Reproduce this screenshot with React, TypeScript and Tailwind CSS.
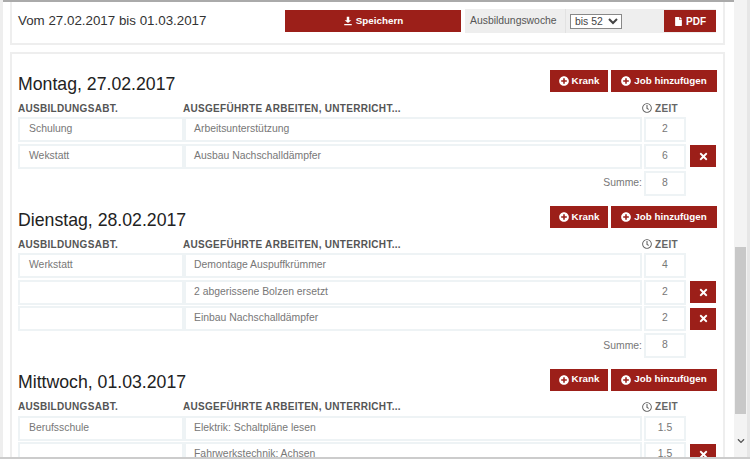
import { FaFile, FaPlusCircle, FaRegClock, FaTimes, FaChevronDown } from "react-icons/fa";

type Row = { dept: string; work: string; time: string; remove?: boolean };

type Day = { title: string; rows: Row[]; sum?: string };

const days: Day[] = [
    {
        title: "Montag, 27.02.2017",
        sum: "8",
        rows: [
            { dept: "Schulung", work: "Arbeitsunterstützung", time: "2" },
            { dept: "Wekstatt", work: "Ausbau Nachschalldämpfer", time: "6", remove: true },
        ],
    },
    {
        title: "Dienstag, 28.02.2017",
        sum: "8",
        rows: [
            { dept: "Werkstatt", work: "Demontage Auspuffkrümmer", time: "4" },
            { dept: "", work: "2 abgerissene Bolzen ersetzt", time: "2", remove: true },
            { dept: "", work: "Einbau Nachschalldämpfer", time: "2", remove: true },
        ],
    },
    {
        title: "Mittwoch, 01.03.2017",
        rows: [
            { dept: "Berufsschule", work: "Elektrik: Schaltpläne lesen", time: "1.5" },
            { dept: "", work: "Fahrwerkstechnik: Achsen", time: "1.5", remove: true },
        ],
    },
];

const cell = "h-[25px] border-2 border-[#eef3f5] flex items-center pb-[1px] text-[10.4px] text-[#777]";

const RedButton = ({ label, className }: { label: string; className: string }) => (
    <button className={`h-[22px] bg-[#9c1f19] text-white text-[9.8px] font-bold flex items-center justify-center gap-[3px] ${className}`}>
        <FaPlusCircle className="text-[10px]" />
        {label}
    </button>
);

const DayBlock = ({ day }: { day: Day }) => (
    <section className="mb-[10.5px]">
        <div className="flex items-center justify-between h-[22px] pr-[6px]">
            <h2 className="text-[17.7px] text-[#222] pt-[6px]">{day.title}</h2>
            <div className="flex gap-[3px]">
                <RedButton label="Krank" className="w-[58px]" />
                <RedButton label="Job hinzufügen" className="w-[106px]" />
            </div>
        </div>
        <div className="flex items-center h-[12px] mt-[10px] mb-[3px] text-[10px] font-bold text-[#555] tracking-[0.3px]">
            <span className="w-[165px]">AUSBILDUNGSABT.</span>
            <span className="w-[457px]">AUSGEFÜHRTE ARBEITEN, UNTERRICHT...</span>
            <span className="flex items-center gap-[3px] ml-[2px] text-[#666]">
                <FaRegClock className="text-[10px]" />
                ZEIT
            </span>
        </div>
        <div className="flex flex-col gap-[1.5px]">
            {day.rows.map((row) => (
                <div key={row.work} className="flex items-center">
                    <div className={`${cell} w-[166px] pl-[9px]`}>{row.dept}</div>
                    <div className={`${cell} w-[458px] pl-[8px]`}>{row.work}</div>
                    <div className={`${cell} w-[42px] ml-[2px] justify-center`}>{row.time}</div>
                    {row.remove && (
                        <button className="ml-[4px] w-[26px] h-[22px] bg-[#9c1f19] text-white flex items-center justify-center">
                            <FaTimes className="text-[11px]" />
                        </button>
                    )}
                </div>
            ))}
        </div>
        {day.sum && (
            <div className="flex items-center mt-[2px]">
                <span className="w-[624px] text-right text-[10.4px] text-[#777]">Summe:</span>
                <div className={`${cell} w-[42px] ml-[2px] justify-center`}>{day.sum}</div>
            </div>
        )}
    </section>
);

const App = () => {
    return (
        <div className="relative w-[750px] h-[459px] overflow-hidden bg-white flex font-['Liberation_Sans',sans-serif]">
            <div className="w-[734px] border-t-2 border-[#aaa] pl-[10px] pr-[9px] overflow-hidden">
                <div className="h-[43px] border-2 border-t-0 border-[#eeeeee] pl-[6px] pr-[7px] flex items-center">
                    <span className="w-[267px] text-[13.35px] text-[#333] pb-[3px]">Vom 27.02.2017 bis 01.03.2017</span>
                    <button className="w-[176px] h-[22px] mb-[3px] bg-[#9c1f19] text-white text-[9.8px] font-bold flex items-center justify-center gap-[3px]">
                        <svg viewBox="0 0 12 12" className="w-[10px] h-[10px]" fill="currentColor">
                            <path d="M4.5 1h3v4H10L6 8.5 2 5h2.5zM1.5 9.5h9V11h-9z" />
                        </svg>
                        Speichern
                    </button>
                    <div className="ml-[4px] mb-[3px] flex items-center h-[24px] bg-[#eeeeee] text-[10.4px] text-[#555]">
                        <span className="w-[100px] pl-[5px]">Ausbildungswoche</span>
                        <div className="w-[99px] h-full flex items-center pl-[4px] border-l border-[#e2e2e2]">
                            <select defaultValue="bis 52" className="w-[52px] h-[15px] bg-white border border-[#888] text-[10.4px] text-[#444]">
                                <option>bis 52</option>
                            </select>
                        </div>
                        <button className="w-[52px] h-[22px] bg-[#9c1f19] text-white text-[10px] font-bold flex items-center justify-center gap-[3px]">
                            <FaFile className="text-[9px]" />
                            PDF
                        </button>
                    </div>
                </div>
                <div className="mt-[7px] h-[420px] border-2 border-b-0 border-[#eeeeee] pl-[6px] pt-[16px] overflow-hidden">
                    {days.map((day) => (
                        <DayBlock key={day.title} day={day} />
                    ))}
                </div>
            </div>
            <div className="w-[16px] bg-[#f3f3f3] border-r-[3px] border-[#e6e6e6] flex flex-col items-center justify-end text-[#555] pb-[14px]">
                <FaChevronDown className="text-[8px]" />
            </div>
            <div className="absolute left-[735px] top-[247px] w-[11px] h-[167px] bg-[#c8c8c8]" />
            <div className="absolute left-0 top-0 w-[3px] h-full bg-[#eeeeee]" />
            <div className="absolute left-0 bottom-0 w-full h-[2px] bg-[#ccc]" />
        </div>
    );
};

export default App;
